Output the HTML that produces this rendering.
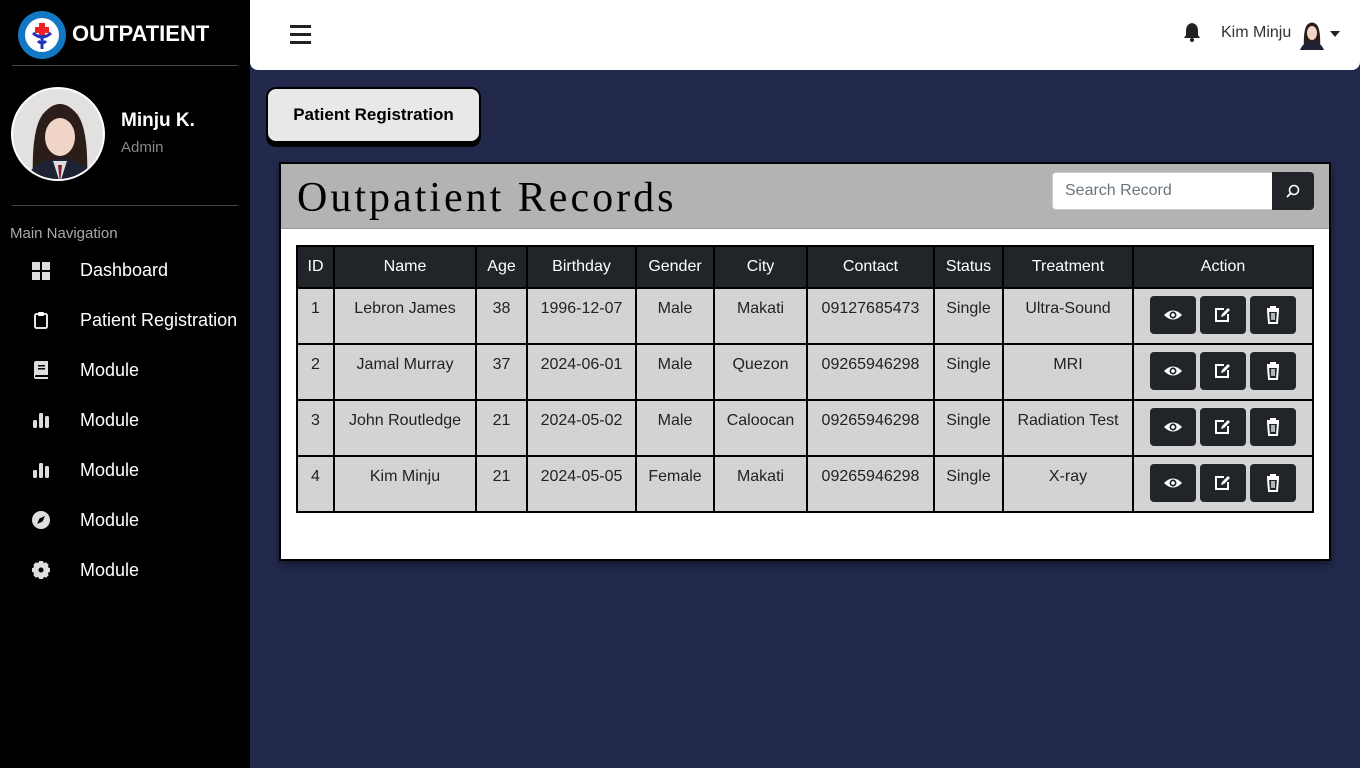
<!DOCTYPE html>
<html><head><meta charset="utf-8"><style>
*{box-sizing:border-box;margin:0;padding:0}
body{width:1360px;height:768px;overflow:hidden;background:#22294d;font-family:"Liberation Sans",Arial,sans-serif;position:relative}
.side{position:absolute;left:0;top:0;width:250px;height:768px;background:#000;color:#fff}
.logo{position:absolute;left:18px;top:11px;width:48px;height:48px;border-radius:50%;background:#1278c4;}
.logo i{position:absolute;left:7px;top:7px;width:34px;height:34px;border-radius:50%;background:#fff}
.brand{position:absolute;left:72px;top:21px;font-size:22px;font-weight:bold}
.hr{position:absolute;left:12px;width:226px;height:1px;background:#444}
.av{position:absolute;left:11px;top:87px;width:94px;height:94px;border-radius:50%;border:2px solid #fff;background:#e3e1e0;overflow:hidden}
.nav{position:absolute;left:80px;font-size:18px;color:#fff}
.ic{position:absolute;left:32px;width:18px;height:18px}
.top{position:absolute;left:250px;top:0;width:1110px;height:70px;background:#fff;border-radius:0 0 8px 8px}
.btn{position:absolute;left:266px;top:87px;width:215px;height:56px;background:#e8e8e8;border:2px solid #000;border-radius:10px;box-shadow:0 4px 0 #000;font-weight:bold;font-size:17px;text-align:center;line-height:52px}
.card{position:absolute;left:279px;top:162px;width:1052px;height:399px;background:#fff;border:2px solid #000;box-shadow:0 4px 8px rgba(0,0,0,.4)}
.ch{height:65px;background:#b3b3b3;border-bottom:1px solid #999;position:relative}
.ch h1{position:absolute;left:16px;top:10px;font-family:"Liberation Serif",serif;font-weight:normal;font-size:42px;letter-spacing:3px}
.srch{position:absolute;left:771px;top:8px;width:221px;height:38px;background:#fff;border:1px solid #ccc;border-radius:4px 0 0 4px;color:#6c757d;font-size:16px;padding:9px 12px}
.sb{position:absolute;left:991px;top:8px;width:42px;height:38px;background:#212529;border-radius:0 4px 4px 0}
table{position:absolute;left:15px;top:81px;border-collapse:collapse;width:1018px}
td,th{border:2px solid #000;text-align:center;font-size:16px;color:#222}
th{background:#212529;color:#fff;font-weight:normal;height:42px}
td{background:#d3d3d3;height:56px;vertical-align:top;padding-top:11px}
.a{display:inline-block;width:46px;height:38px;background:#212529;border-radius:4px;margin:0 2px;position:relative;vertical-align:top;margin-top:-2px}
.a svg{position:absolute;left:14px;top:10px}
</style></head><body>
<div class="side">
<div class="logo"><i></i><svg style="position:absolute;left:12px;top:10px" width="24" height="30" viewBox="0 0 24 30"><rect x="9" y="2" width="6" height="14" fill="#e22"/><rect x="5" y="6" width="14" height="6" fill="#e22"/><path d="M3 12 Q12 20 21 12 M12 14 V28 M8 20 Q12 24 16 20" stroke="#2233bb" stroke-width="3" fill="none"/></svg></div>
<div class="brand">OUTPATIENT</div>
<div class="hr" style="top:65px"></div>
<div class="av"><svg width="94" height="94" viewBox="0 0 94 94"><path d="M20 94 Q18 40 30 25 Q47 5 64 25 Q76 40 74 94Z" fill="#2a1d1a"/><ellipse cx="47" cy="48" rx="15" ry="19" fill="#f1d5c6"/><path d="M10 94 Q20 70 47 70 Q74 70 84 94Z" fill="#1e2235"/><path d="M40 72 L47 94 L54 72Z" fill="#ddd"/><path d="M45 76 L47 94 L49 76Z" fill="#7a1f2a"/></svg></div>
<div style="position:absolute;left:121px;top:110px;font-size:19px;font-weight:bold">Minju K.</div>
<div style="position:absolute;left:121px;top:139px;font-size:15px;color:#888">Admin</div>
<div class="hr" style="top:205px"></div>
<div style="position:absolute;left:10px;top:225px;font-size:15px;color:#aaa">Main Navigation</div>
<svg class="ic" style="top:262px" viewBox="0 0 18 18"><rect x="0" y="0" width="8" height="8" fill="#ddd"/><rect x="10" y="0" width="8" height="8" fill="#ddd"/><rect x="0" y="10" width="8" height="8" fill="#ddd"/><rect x="10" y="10" width="8" height="8" fill="#ddd"/></svg><div class="nav" style="top:260px">Dashboard</div>
<svg class="ic" style="top:311px" viewBox="0 0 18 18"><rect x="3" y="3" width="12" height="14" rx="1.5" fill="none" stroke="#fff" stroke-width="1.8"/><rect x="6" y="1" width="6" height="4" rx="1" fill="#fff"/></svg><div class="nav" style="top:310px">Patient Registration</div>
<svg class="ic" style="top:361px" viewBox="0 0 18 18"><path d="M2 2 Q2 0 4 0 H16 V14 H4 Q3 14 3 16 H16 V18 H4 Q2 18 2 16Z" fill="#ddd"/><rect x="6" y="4" width="7" height="1.5" fill="#000"/><rect x="6" y="7" width="7" height="1.5" fill="#000"/></svg><div class="nav" style="top:360px">Module</div>
<svg class="ic" style="top:411px" viewBox="0 0 18 18"><rect x="1" y="9" width="4" height="8" rx="1.5" fill="#ddd"/><rect x="7" y="2" width="4" height="15" rx="1.5" fill="#ddd"/><rect x="13" y="5" width="4" height="12" rx="1.5" fill="#ddd"/></svg><div class="nav" style="top:410px">Module</div>
<svg class="ic" style="top:461px" viewBox="0 0 18 18"><rect x="1" y="9" width="4" height="8" rx="1.5" fill="#ddd"/><rect x="7" y="2" width="4" height="15" rx="1.5" fill="#ddd"/><rect x="13" y="5" width="4" height="12" rx="1.5" fill="#ddd"/></svg><div class="nav" style="top:460px">Module</div>
<svg class="ic" style="top:511px" viewBox="0 0 18 18"><circle cx="9" cy="9" r="9" fill="#ddd"/><path d="M13 5 L10.5 10.5 L5 13 L7.5 7.5Z" fill="#000"/></svg><div class="nav" style="top:510px">Module</div>
<svg class="ic" style="top:561px" viewBox="0 0 18 18"><circle cx="9" cy="9" r="6" fill="none" stroke="#ddd" stroke-width="4"/><g stroke="#ddd" stroke-width="4"><path d="M9 0V18M0 9H18M2.6 2.6L15.4 15.4M15.4 2.6L2.6 15.4"/></g><circle cx="9" cy="9" r="2.5" fill="#000"/></svg><div class="nav" style="top:560px">Module</div>
</div>
<div class="top">
<div style="position:absolute;left:40px;top:25px;width:21px;height:3px;background:#222;box-shadow:0 8px 0 #222,0 16px 0 #222"></div>
<svg style="position:absolute;left:933px;top:22px" width="18" height="20" viewBox="0 0 18 20"><path d="M9 1 Q3 2 3 9 V13 L1 16 H17 L15 13 V9 Q15 2 9 1Z" fill="#222"/><circle cx="9" cy="18" r="2" fill="#222"/></svg>
<div style="position:absolute;left:971px;top:24px;font-size:16px;color:#333">Kim Minju</div>
<svg style="position:absolute;left:1048px;top:20px" width="28" height="30" viewBox="0 0 28 30"><path d="M6 30 Q5 10 9 5 Q14 0 19 5 Q23 10 22 30Z" fill="#2a1d1a"/><ellipse cx="14" cy="13" rx="5" ry="7" fill="#f1d5c6"/><path d="M2 30 Q6 21 14 21 Q22 21 26 30Z" fill="#1e2235"/></svg>
<div style="position:absolute;left:1080px;top:31px;border:5px solid transparent;border-top:6px solid #222"></div>
</div>
<div class="btn">Patient Registration</div>
<div class="card">
<div class="ch"><h1>Outpatient Records</h1><div class="srch">Search Record</div><div class="sb"><svg style="position:absolute;left:14px;top:12px" width="14" height="14" viewBox="0 0 14 14"><circle cx="8" cy="6" r="4.5" fill="none" stroke="#fff" stroke-width="1.6"/><path d="M5 9 L1 13" stroke="#fff" stroke-width="1.8"/></svg></div></div>
<table>
<tr><th style="width:37px">ID</th><th style="width:142px">Name</th><th style="width:51px">Age</th><th style="width:109px">Birthday</th><th style="width:78px">Gender</th><th style="width:93px">City</th><th style="width:127px">Contact</th><th style="width:69px">Status</th><th style="width:130px">Treatment</th><th>Action</th></tr>
<tr><td>1</td><td>Lebron James</td><td>38</td><td>1996-12-07</td><td>Male</td><td>Makati</td><td>09127685473</td><td>Single</td><td>Ultra-Sound</td><td>ACT</td></tr>
<tr><td>2</td><td>Jamal Murray</td><td>37</td><td>2024-06-01</td><td>Male</td><td>Quezon</td><td>09265946298</td><td>Single</td><td>MRI</td><td>ACT</td></tr>
<tr><td>3</td><td>John Routledge</td><td>21</td><td>2024-05-02</td><td>Male</td><td>Caloocan</td><td>09265946298</td><td>Single</td><td>Radiation Test</td><td>ACT</td></tr>
<tr><td>4</td><td>Kim Minju</td><td>21</td><td>2024-05-05</td><td>Female</td><td>Makati</td><td>09265946298</td><td>Single</td><td>X-ray</td><td>ACT</td></tr>
</table>
</div>
<script>
var act='<span class="a"><svg width="18" height="18" viewBox="0 0 18 18"><path d="M0 9 Q9 0 18 9 Q9 18 0 9Z" fill="#fff"/><circle cx="9" cy="9" r="3.5" fill="#212529"/><circle cx="9" cy="9" r="1.8" fill="#fff"/></svg></span><span class="a"><svg width="18" height="18" viewBox="0 0 18 18"><path d="M10 3 H2 V15 H14 V8" fill="none" stroke="#fff" stroke-width="2"/><path d="M7 11 L8 8 L14 2 L16 4 L10 10Z" fill="#fff"/></svg></span><span class="a"><svg width="18" height="18" viewBox="0 0 18 18"><path d="M3 3 H15 M7 3 V1 H11 V3" stroke="#fff" stroke-width="2" fill="none"/><path d="M4 5 H14 L13 17 H5Z" fill="none" stroke="#fff" stroke-width="2"/><path d="M8 7 V14 M10 7 V14" stroke="#fff" stroke-width="1.3"/></svg></span>';
document.querySelectorAll('td').forEach(function(t){if(t.textContent=='ACT'){t.innerHTML=act;t.style.paddingTop='9px'}});
</script>
</body></html>
